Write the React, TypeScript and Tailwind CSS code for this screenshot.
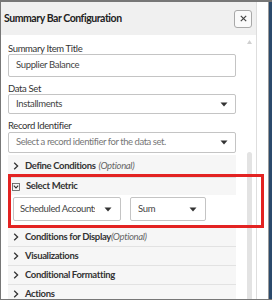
import React from "react";

const Caret = () => (
  <svg width="8" height="5" viewBox="0 0 8 5" className="shrink-0">
    <path d="M0.5 0.5 L7.5 0.5 L4 4.5 Z" fill="#333" />
  </svg>
);

const Chevron = () => (
  <svg width="6" height="8" viewBox="0 0 6 8" className="shrink-0">
    <path d="M1.2 0.8 L4.6 4 L1.2 7.2" fill="none" stroke="#333" strokeWidth="1.3" />
  </svg>
);

const BoxChevron = () => (
  <svg width="8" height="8" viewBox="0 0 8 8" className="shrink-0">
    <rect x="0.5" y="0.5" width="7" height="7" fill="none" stroke="#555" strokeWidth="0.8" />
    <path d="M1.8 2.6 L4 4.9 L6.2 2.6" fill="none" stroke="#333" strokeWidth="1.1" />
  </svg>
);

function Row({ title, optional }: { title: string; optional?: boolean }) {
  return (
    <div className="shrink-0 h-[19px] flex items-center gap-[6px] pl-[5px] bg-[#f6f6f6] border-b border-[#e2e2e2]">
      <Chevron />
      <span className="font-bold text-[#333] whitespace-nowrap">
        {title}
        {optional && <span className="italic font-normal text-[#666]">(Optional)</span>}
      </span>
    </div>
  );
}

export default function App() {
  return (
    <div
      className="relative w-[272px] h-[300px] bg-white overflow-hidden flex border-t-2 border-l border-b border-[#777]"
      style={{ fontFamily: "Lato, 'Noto Sans', sans-serif" }}
    >
      <div className="w-[256px] shrink-0 flex flex-col border-r border-[#dedede]">
        <div className="h-[33px] shrink-0 bg-[#f0f0f0] flex items-center justify-between pl-[3px] pr-[4px]">
          <span className="text-[10.5px] tracking-[-0.45px] font-bold text-[#222]">Summary Bar Configuration</span>
          <div className="w-[18px] h-[18px] border border-[#a8a8a8] rounded-[3px] bg-[#fafafa] flex items-center justify-center">
            <svg width="7" height="7" viewBox="0 0 7 7">
              <path d="M0.8 0.8 L6.2 6.2 M6.2 0.8 L0.8 6.2" stroke="#444" strokeWidth="1.2" />
            </svg>
          </div>
        </div>
        <div className="flex flex-1 min-h-0 items-start overflow-hidden">
          <div className="w-[235px] shrink-0 pl-[7px] pt-[9px] flex flex-col text-[9.5px] tracking-[-0.35px]">
            <div className="shrink-0 text-[#333] leading-[10px] h-[10px]">Summary Item Title</div>
            <div className="shrink-0 h-[23px] border border-[#c4c4c4] rounded-[2px] flex items-center px-[7px] text-[#444]">
              Supplier Balance
            </div>
            <div className="shrink-0 mt-[7px] text-[#333] leading-[10px] h-[10px]">Data Set</div>
            <div className="shrink-0 h-[20px] border border-[#c4c4c4] rounded-[2px] flex items-center justify-between px-[7px] text-[#444]">
              <span>Installments</span>
              <Caret />
            </div>
            <div className="shrink-0 mt-[7px] text-[#333] leading-[10px] h-[10px]">Record Identifier</div>
            <div className="shrink-0 mt-[1px] h-[21px] border border-[#c4c4c4] rounded-[2px] flex items-center justify-between px-[7px] text-[#777]">
              <span className="tracking-[-0.45px]">Select a record identifier for the data set.</span>
              <Caret />
            </div>
            <div className="shrink-0 mt-[2px] flex flex-col">
              <div className="shrink-0 h-[23px] flex items-center gap-[6px] pl-[5px] bg-[#f6f6f6] border-b border-[#e2e2e2]">
                <Chevron />
                <span className="font-bold text-[#333] whitespace-nowrap">
                  Define Conditions
                  <span className="italic font-normal text-[#666] ml-[3px]">(Optional)</span>
                </span>
              </div>
              <div className="shrink-0 h-[17px] flex items-center gap-[6px] pl-[4px] bg-[#f6f6f6]">
                <BoxChevron />
                <span className="font-bold text-[#333]">Select Metric</span>
              </div>
              <div className="shrink-0 h-[33px] flex items-start gap-[9px] pl-[5px] pt-[2px]">
                <div className="w-[108px] h-[24px] border border-[#c4c4c4] rounded-[2px] flex items-center justify-between pl-[6px] pr-[8px] text-[#444]">
                  <span className="whitespace-nowrap overflow-hidden w-[75px]">Scheduled Accounts</span>
                  <Caret />
                </div>
                <div className="w-[76px] h-[24px] border border-[#c4c4c4] rounded-[2px] flex items-center justify-between pl-[7px] pr-[8px] text-[#444]">
                  <span>Sum</span>
                  <Caret />
                </div>
              </div>
              <Row title="Conditions for Display" optional />
              <Row title="Visualizations" />
              <Row title="Conditional Formatting" />
              <Row title="Actions" />
            </div>
          </div>
          <div className="flex-1 self-stretch relative">
            <svg width="5" height="4" viewBox="0 0 5 4" className="absolute left-[11px] top-[5px]">
              <path d="M0 4 L2.5 0 L5 4 Z" fill="#d0d0d0" />
            </svg>
            <div className="absolute left-[11px] top-[117px] w-[5px] bottom-0 bg-[#e3e3e3] rounded-t-[3px]" />
          </div>
        </div>
      </div>
      <div className="flex-1" />
      <div className="w-px bg-[#9a9a9a]" />
      <div className="w-[3px] bg-[#2b4a6c]" />
      <div className="absolute left-[7px] top-[172px] w-[256px] h-[54px] border-[3px] border-[#e32322]" />
    </div>
  );
}
